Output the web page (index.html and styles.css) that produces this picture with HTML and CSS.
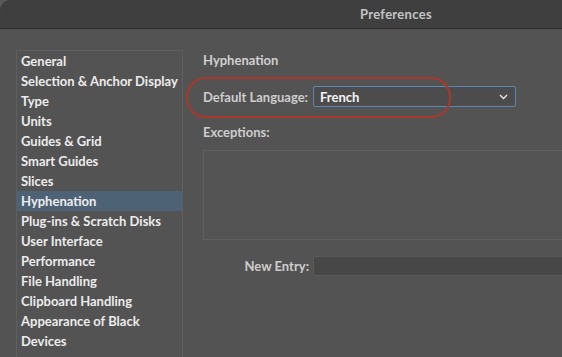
FILE: index.html
```html
<!DOCTYPE html>
<html>
<head>
<meta charset="utf-8">
<link rel="stylesheet" href="styles.css">
</head>
<body>
<div class="window">
  <div class="titlebar"><span class="title">Preferences</span></div>
  <div class="content">
    <ul class="nav">
      <li>General</li>
      <li>Selection &amp; Anchor Display</li>
      <li>Type</li>
      <li>Units</li>
      <li>Guides &amp; Grid</li>
      <li>Smart Guides</li>
      <li>Slices</li>
      <li class="active">Hyphenation</li>
      <li>Plug-ins &amp; Scratch Disks</li>
      <li>User Interface</li>
      <li>Performance</li>
      <li>File Handling</li>
      <li>Clipboard Handling</li>
      <li>Appearance of Black</li>
      <li>Devices</li>
    </ul>
    <div class="panel">
      <div class="heading">Hyphenation</div>
      <div class="lang-row">
        <span class="label">Default Language:</span>
        <div class="select">
          <span class="value">French</span>
          <svg class="chev" width="9" height="6" viewBox="0 0 9 6"><path d="M1 1 L4.5 4.5 L8 1" fill="none" stroke="#e6e6e6" stroke-width="1.4"/></svg>
        </div>
        <div class="annot"></div>
      </div>
      <div class="label exc">Exceptions:</div>
      <div class="exbox"></div>
      <div class="entry-row">
        <span class="label entry-label">New Entry:</span>
        <div class="input"></div>
      </div>
    </div>
  </div>
</div>
</body>
</html>
```
FILE: styles.css
```css
* { box-sizing: border-box; }
html, body { margin: 0; padding: 0; }
body {
  width: 562px;
  height: 357px;
  overflow: hidden;
  background: #5a5a5a;
  font-family: Lato, "Open Sans", sans-serif;
}
.window {
  width: 562px;
  height: 357px;
  background: #535353;
  border-top-left-radius: 10px;
  overflow: hidden;
  display: flex;
  flex-direction: column;
}
.titlebar {
  height: 29px;
  flex: none;
  background: #3f3f3f;
  border-bottom: 1px solid #2c2c2c;
  position: relative;
}
.title {
  position: absolute;
  left: 360px;
  top: 6px;
  font-size: 13px;
  font-weight: 700;
  letter-spacing: 0.3px;
  color: #c4c4c4;
}
.content {
  display: flex;
  flex: 1;
  padding-top: 21px;
}
.nav {
  list-style: none;
  margin: 0 0 0 16px;
  padding: 0;
  width: 167px;
  border: 1px solid #5f5f5f;
  border-bottom: none;
  background: #535353;
  flex: none;
}
.nav li {
  height: 20px;
  line-height: 20px;
  padding-left: 4px;
  font-size: 13px;
  font-weight: 700;
  color: #ececec;
  white-space: nowrap;
}
.nav li.active {
  background: #4e6276;
}
.panel {
  flex: 1;
  min-width: 0;
  padding-left: 20px;
  position: relative;
}
.heading {
  font-size: 13px;
  color: #d0d0d0;
  font-weight: 700;
  line-height: 18px;
  margin-top: 1px;
}
.label {
  font-size: 13px;
  font-weight: 700;
  color: #cdcdcd;
}
.lang-row {
  display: flex;
  align-items: center;
  margin-top: 17px;
  position: relative;
}
.lang-row .label { width: 110px; }
.select {
  width: 203px;
  height: 21px;
  border: 1px solid #5c86b4;
  border-radius: 2px;
  background: #4c4c4c;
  display: flex;
  align-items: center;
  justify-content: space-between;
  padding: 0 7px 0 6px;
}
.value {
  font-size: 13px;
  font-weight: 700;
  color: #f4f4f4;
}
.annot {
  position: absolute;
  left: -17px;
  top: -9px;
  width: 265px;
  height: 41px;
  border: 2.5px solid #a9382b;
  border-radius: 20px;
}
.exc {
  margin-top: 16px;
  line-height: 18px;
}
.exbox {
  margin-top: 9px;
  height: 90px;
  border: 1px solid #5f5f5f;
  border-right: none;
  background: #545454;
}
.entry-row {
  display: flex;
  align-items: center;
  margin-top: 16px;
}
.entry-label {
  width: 110px;
  text-align: right;
  padding-right: 4px;
}
.input {
  flex: 1;
  height: 20px;
  background: #474747;
  border: 1px solid #5a5a5a;
  border-right: none;
  border-radius: 2px 0 0 2px;
}
```
